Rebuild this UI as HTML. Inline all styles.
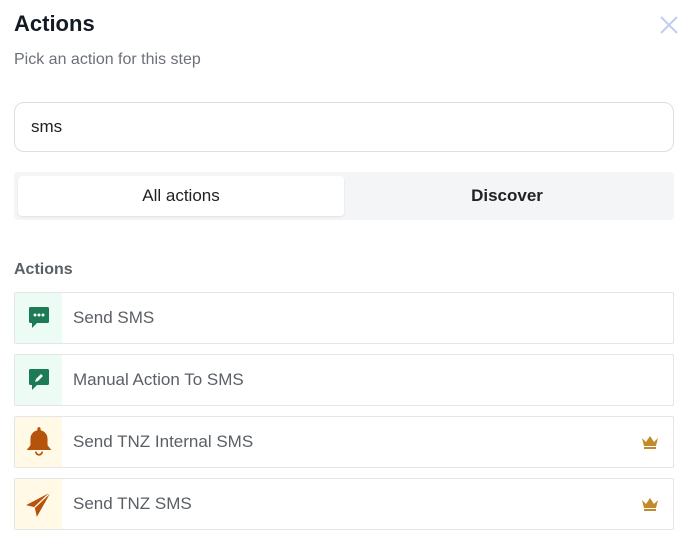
<!DOCTYPE html>
<html><head><style>
body{margin:0;width:682px;height:541px;background:#fff;font-family:"Liberation Sans",sans-serif;position:relative;overflow:hidden}
.a{position:absolute}
.row{position:absolute;left:14px;width:658px;height:50px;border:1px solid #e3e5e8;border-radius:2px;display:flex;align-items:center;box-sizing:content-box}
.ic{width:47px;height:50px;display:flex;align-items:center;justify-content:center}
.g{background:#ecfbf3}.y{background:#fff9e6}
.t{margin-left:11px;font-size:17px;color:#5a5f66}
.cr{position:absolute;right:13px;top:17px}
</style></head><body>
<div class="a" style="left:14px;top:11px;font-size:22px;font-weight:bold;color:#141a24">Actions</div>
<div class="a" style="left:14px;top:51px;font-size:16px;color:#6b7079">Pick an action for this step</div>
<svg class="a" style="left:659px;top:15px" width="20" height="20" viewBox="0 0 20 20"><path d="M2 2L18 18M18 2L2 18" stroke="#c3ccf0" stroke-width="2"/></svg>
<div class="a" style="left:14px;top:102px;width:658px;height:48px;border:1px solid #dcdfe4;border-radius:10px"></div>
<div class="a" style="left:31px;top:117px;font-size:17px;color:#222">sms</div>
<div class="a" style="left:14px;top:172px;width:660px;height:48px;background:#f4f5f7;border-radius:4px"></div>
<div class="a" style="left:18px;top:176px;width:326px;height:40px;background:#fff;border-radius:4px;box-shadow:0 1px 2px rgba(0,0,0,.08);text-align:center;line-height:40px;font-size:17px;color:#222">All actions</div>
<div class="a" style="left:344px;top:176px;width:326px;height:40px;text-align:center;line-height:40px;font-size:17px;font-weight:bold;color:#222">Discover</div>
<div class="a" style="left:14px;top:261px;font-size:16px;font-weight:bold;color:#5a5f66">Actions</div>

<div class="row" style="top:292px"><div class="ic g"><svg width="24" height="24" viewBox="0 0 24 24"><path d="M2 2.5Q2 1 3.5 1h17Q22 1 22 2.5v13Q22 17 20.5 17H10l-5 5v-5H3.5Q2 17 2 15.5z" fill="#1d7a56"/><circle cx="8" cy="9" r="1.5" fill="#fff"/><circle cx="12" cy="9" r="1.5" fill="#fff"/><circle cx="16" cy="9" r="1.5" fill="#fff"/></svg></div><div class="t">Send SMS</div></div>
<div class="row" style="top:354px"><div class="ic g"><svg width="24" height="24" viewBox="0 0 24 24"><path d="M2 2.5Q2 1 3.5 1h17Q22 1 22 2.5v13Q22 17 20.5 17H10l-5 5v-5H3.5Q2 17 2 15.5z" fill="#1d7a56"/><path d="M8 14l1-3 5-5 2 2-5 5z" fill="#fff"/></svg></div><div class="t">Manual Action To SMS</div></div>
<div class="row" style="top:416px"><div class="ic y"><svg width="28" height="32" viewBox="0 0 26 30"><path d="M13 1c1 0 1.5.7 1.5 1.5V4c4 1 6.5 4 6.5 8v6l3.5 4.5H1.5L5 18v-6c0-4 2.5-7 6.5-8V2.5C11.5 1.7 12 1 13 1z" fill="#b5530c"/><path d="M10 24a3 3 0 006 0" fill="none" stroke="#b5530c" stroke-width="1.6"/></svg></div><div class="t">Send TNZ Internal SMS</div>
<svg class="cr" width="20" height="16" viewBox="0 0 20 16"><path d="M2 4l4 4 4-6 4 6 4-4-2 8H4z" fill="#c28a2a"/><rect x="4" y="13" width="12" height="2" fill="#c28a2a"/></svg></div>
<div class="row" style="top:478px"><div class="ic y"><svg width="28" height="28" viewBox="0 0 26 26"><path d="M24 2L1 14l8 2 2 9z" fill="#b5530c"/><path d="M24 2L9 16" stroke="#fff9e6" stroke-width="1.2"/></svg></div><div class="t">Send TNZ SMS</div>
<svg class="cr" width="20" height="16" viewBox="0 0 20 16"><path d="M2 4l4 4 4-6 4 6 4-4-2 8H4z" fill="#c28a2a"/><rect x="4" y="13" width="12" height="2" fill="#c28a2a"/></svg></div>
</body></html>
